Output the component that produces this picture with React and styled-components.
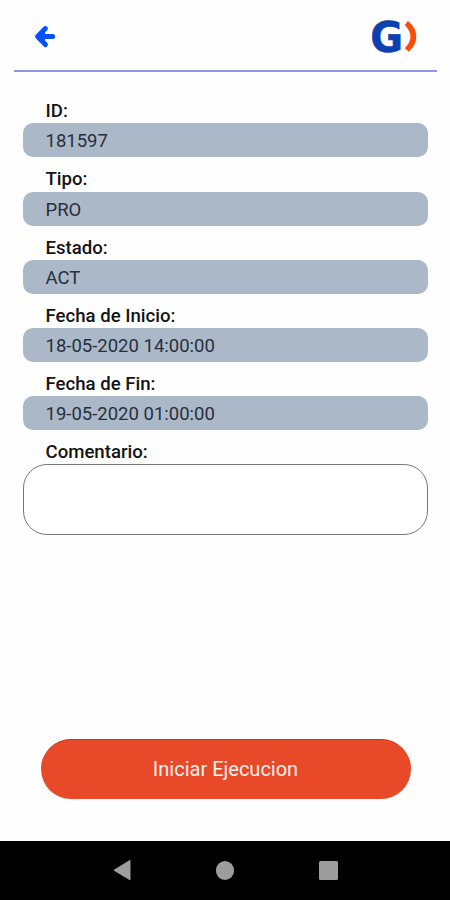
import styled, { createGlobalStyle } from "styled-components";

const fields = [
  { label: "ID:", value: "181597" },
  { label: "Tipo:", value: "PRO" },
  { label: "Estado:", value: "ACT" },
  { label: "Fecha de Inicio:", value: "18-05-2020 14:00:00" },
  { label: "Fecha de Fin:", value: "19-05-2020 01:00:00" },
];

const App = () => {
  return (
    <>
      <GlobalStyle />
      <Screen>
        <Header>
          <BackButton aria-label="Volver">
            <svg width="22" height="24" viewBox="0 0 22 24">
              <path
                d="M11.4 3.6L3.6 11.6l7.8 8M4.5 11.6h14.2"
                fill="none"
                stroke="#0551f7"
                strokeWidth="5"
                strokeLinecap="round"
                strokeLinejoin="round"
              />
              <path d="M3.6 11.6L11 5V18Z" fill="#0551f7" />
            </svg>
          </BackButton>
          <Logo width="56" height="50" viewBox="0 0 56 50">
            <LogoLetter x="4" y="39.7" transform="translate(1.6 0) scale(0.92 1)">
              G
            </LogoLetter>
            <path
              d="M43 9C54 18 54 31 43.8 39.8L39.8 36.2C47.4 28.5 47.4 21 39.8 13Z"
              fill="#fb4d0a"
            />
          </Logo>
        </Header>
        <Form>
          {fields.map(({ label, value }) => (
            <Field key={label}>
              <Label>{label}</Label>
              <Value>{value}</Value>
            </Field>
          ))}
          <Field>
            <Label>Comentario:</Label>
            <Comment />
          </Field>
        </Form>
        <StartButton>Iniciar Ejecucion</StartButton>
        <NavBar>
          <svg width="18" height="22" viewBox="0 0 18 22">
            <path
              d="M1 11.2L17 1.4V20.8Z"
              fill="#9d9d9d"
              stroke="#9d9d9d"
              strokeLinejoin="round"
            />
          </svg>
          <HomeKey />
          <RecentsKey />
        </NavBar>
      </Screen>
    </>
  );
};

const GlobalStyle = createGlobalStyle`
  * {
    box-sizing: border-box;
  }
  body {
    margin: 0;
    background: #fefefe;
    font-family: Roboto, sans-serif;
  }
`;

const Screen = styled.div`
  display: flex;
  flex-direction: column;
  width: 450px;
  height: 900px;
  overflow: hidden;
`;

const Header = styled.header`
  display: flex;
  justify-content: space-between;
  align-items: flex-start;
  height: 72.4px;
  margin: 0 13.5px 0 14px;
  padding: 12px 15.5px 0 20px;
  border-bottom: 2px solid #9095e6;
`;

const BackButton = styled.button`
  display: flex;
  margin-top: 13px;
  padding: 0;
  border: none;
  background: none;
`;

const Logo = styled.svg`
  display: block;
`;

const LogoLetter = styled.text`
  font-family: "DejaVu Sans", sans-serif;
  font-size: 43.5px;
  font-weight: bold;
  fill: #0b40b0;
  stroke: #0b40b0;
  stroke-width: 0.6px;
`;

const Form = styled.main`
  display: flex;
  flex-direction: column;
  flex: 1;
  padding: 16.9px 22px 0 23px;
`;

const Field = styled.div`
  display: flex;
  flex-direction: column;
`;

const Label = styled.label`
  height: 34.1px;
  padding: 11px 0 0 22.5px;
  font-size: 18.6px;
  font-weight: 500;
  line-height: 22px;
  color: #141414;
`;

const Value = styled.div`
  height: 34.1px;
  padding-left: 22.5px;
  border-radius: 10px;
  background: #abb8c8;
  font-size: 18.5px;
  line-height: 36px;
  color: #26303c;
`;

const Comment = styled.textarea`
  height: 71px;
  padding: 10px 22px;
  border: 1px solid #777;
  border-radius: 24px;
  background: #fff;
  outline: none;
  resize: none;
`;

const StartButton = styled.button`
  height: 60px;
  margin: 0 39.5px 42px 40.5px;
  border: none;
  border-top: 1.5px solid #dc2a1c;
  border-radius: 30px;
  background: #e84928;
  font-family: inherit;
  font-size: 20px;
  color: #fff1ec;
`;

const NavBar = styled.nav`
  display: flex;
  justify-content: space-between;
  align-items: center;
  height: 59.5px;
  padding: 0 112px 0 113px;
  background: #000;
`;

const HomeKey = styled.span`
  width: 18.5px;
  height: 18.5px;
  border-radius: 50%;
  background: #9d9d9d;
`;

const RecentsKey = styled.span`
  width: 19.5px;
  height: 19.5px;
  border-radius: 1.5px;
  background: #9d9d9d;
`;

export default App;
